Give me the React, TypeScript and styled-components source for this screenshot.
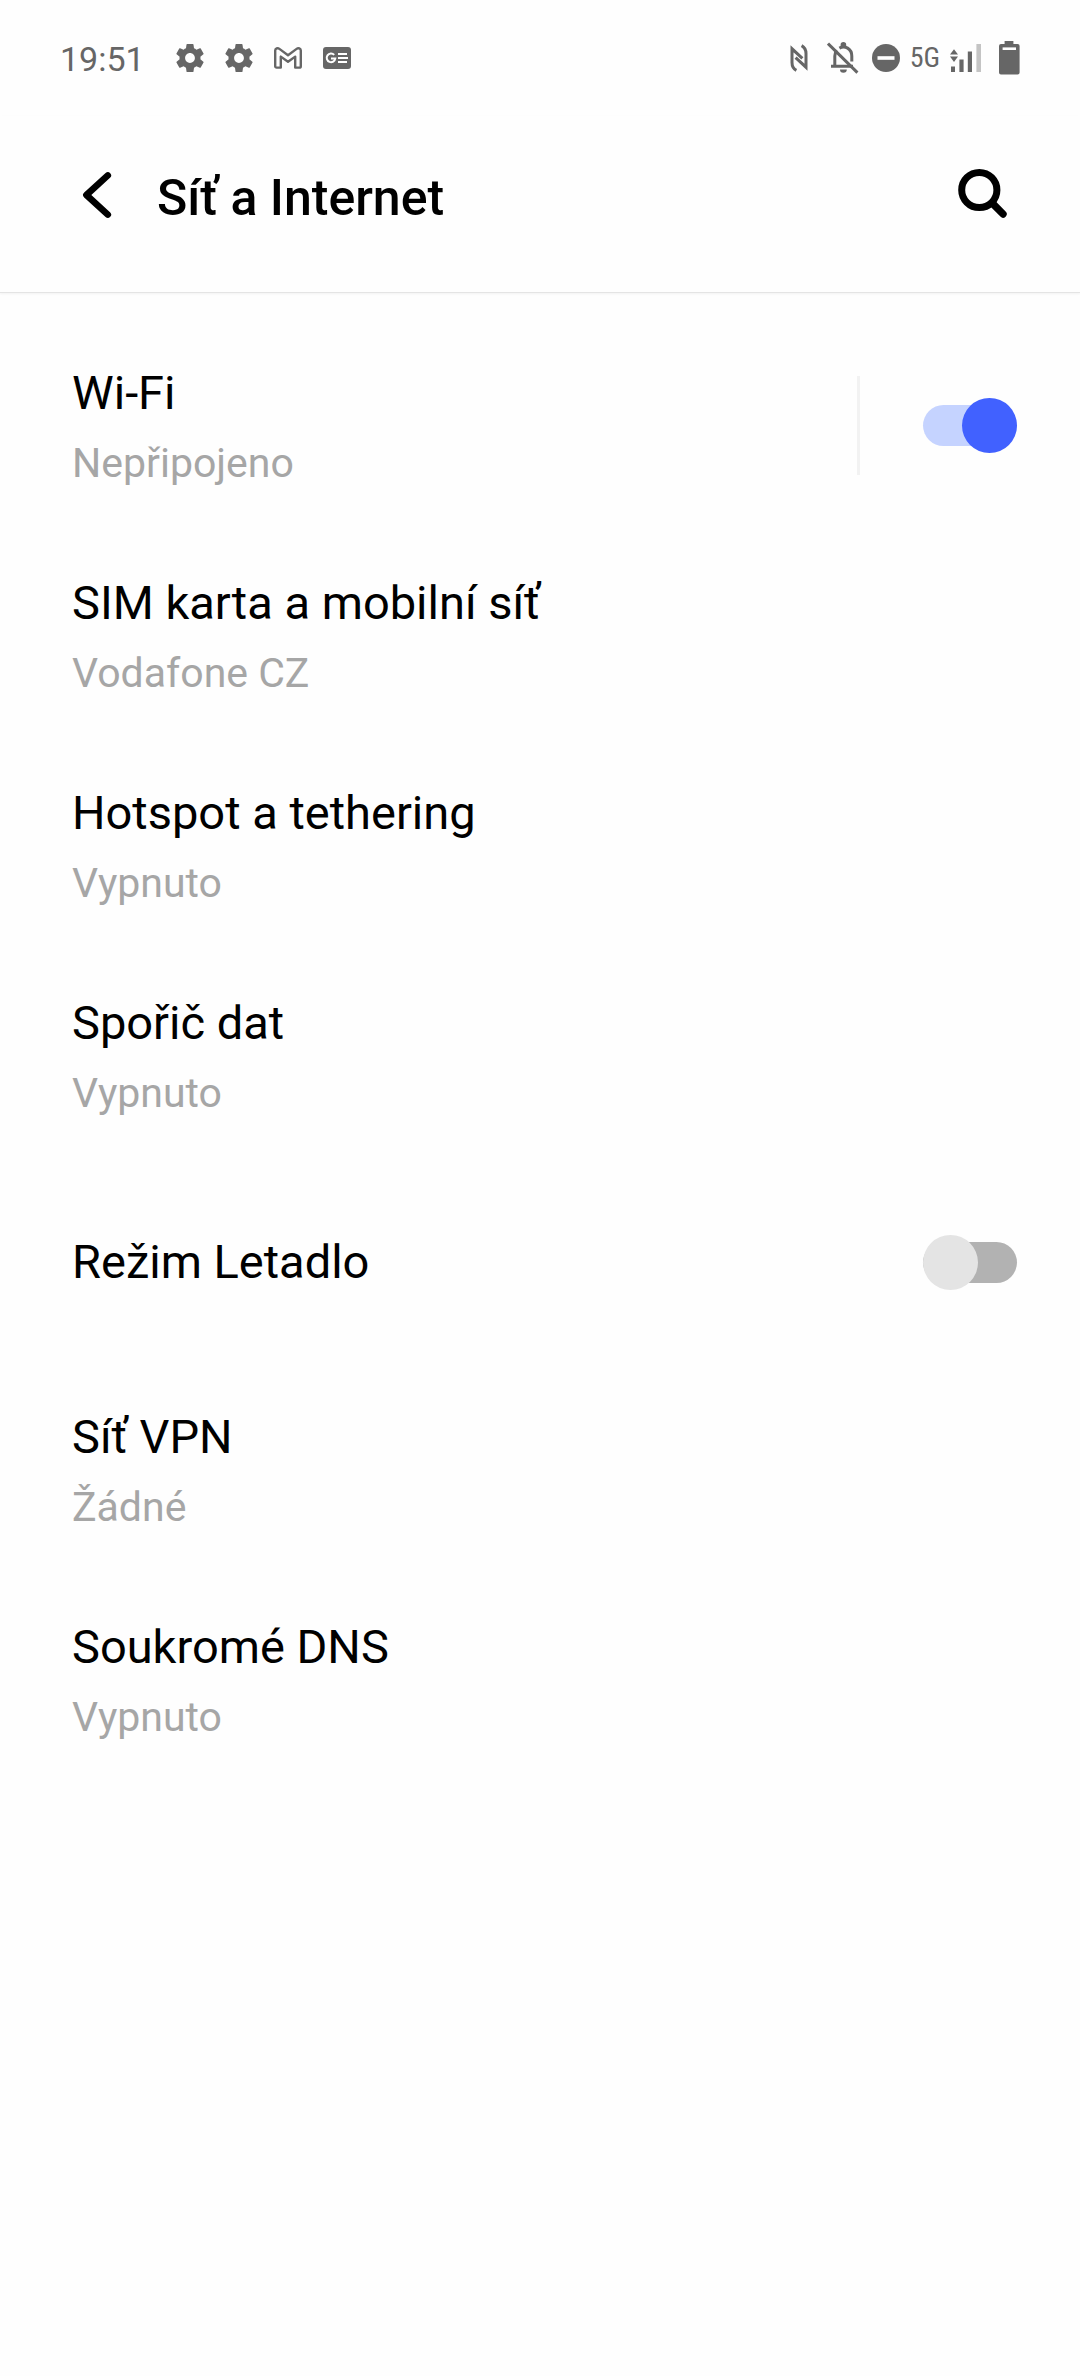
import React from "react";
import styled, { createGlobalStyle } from "styled-components";

const GlobalStyle = createGlobalStyle`
  *, *::before, *::after { box-sizing: border-box; }
  body {
    margin: 0;
    background: #fefefe;
    color: #000;
    font-family: Roboto, "Noto Sans", sans-serif;
  }
  button { font: inherit; color: inherit; background: none; border: 0; padding: 0; text-align: left; cursor: pointer; }
`;

const StatusBar = styled.div`
  display: flex;
  align-items: center;
  justify-content: space-between;
  height: 116px;
  padding: 0 60px;
  color: #666;
`;

const StatusGroup = styled.div<{ $gap: number }>`
  display: flex;
  align-items: center;
  gap: ${(p) => p.$gap}px;
`;

const Clock = styled.time`
  margin-right: 10px;
  padding-top: 2px;
  font-size: 34px;
  line-height: 40px;
`;

const Network = styled.span`
  font-family: "Roboto Condensed", Roboto, sans-serif;
  font-size: 28px;
  line-height: 32px;
`;

const Icon = styled.svg`
  display: block;
  flex: none;
`;

const Header = styled.header`
  display: flex;
  align-items: flex-start;
  height: 177px;
  padding: 50px 72px 0;
  border-bottom: 1px solid #e4e4e4;
  box-shadow: 0 1px 2px #f2f2f2;
`;

const Title = styled.h1`
  flex: 1;
  margin: 0 0 0 35px;
  font-size: 50px;
  font-weight: 500;
  line-height: 64px;
`;

const IconButton = styled.button`
  display: flex;
  align-items: center;
  justify-content: center;
  width: 50px;
  height: 58px;
`;

const List = styled.ul`
  margin: 0;
  padding: 27px 0 0;
  list-style: none;
`;

const Row = styled.li`
  display: flex;
  align-items: center;
  padding-right: 63px;
`;

const Entry = styled.button`
  flex: 1;
  display: flex;
  flex-direction: column;
  gap: 17px;
  padding: 45px 0 42px 72px;
`;

const SwitchLabel = styled.label`
  flex: 1;
  padding: 74px 0 74px 72px;
  font-size: 47px;
  line-height: 56px;
`;

const Name = styled.span`
  font-size: 47px;
  line-height: 56px;
`;

const Summary = styled.span`
  color: #a6a6a6;
  font-size: 41px;
  line-height: 50px;
`;

const Divider = styled.span`
  width: 3px;
  height: 99px;
  margin-right: 63px;
  background: #f2f2f2;
`;

const Switch = styled.input`
  appearance: none;
  display: grid;
  align-items: center;
  width: 94px;
  height: 55px;
  margin: 0;
  cursor: pointer;

  &::before,
  &::after {
    content: "";
    grid-area: 1 / 1;
  }
  &::before {
    height: 41px;
    border-radius: 21px;
    background: #b2b2b2;
  }
  &::after {
    width: 55px;
    height: 55px;
    border-radius: 50%;
    background: #e4e4e4;
  }
  &:checked::before { background: #c5d3ff; }
  &:checked::after { justify-self: end; background: #4161ff; }
`;

const GearIcon = () => (
  <Icon width="28" height="28" viewBox="2 2 20 20" fill="currentColor" aria-hidden="true">
    <path d="M19.43 12.98c.04-.32.07-.64.07-.98s-.03-.66-.07-.98l2.11-1.65c.19-.15.24-.42.12-.64l-2-3.46c-.12-.22-.39-.3-.61-.22l-2.49 1c-.52-.4-1.08-.73-1.69-.98l-.38-2.65C14.46 2.18 14.25 2 14 2h-4c-.25 0-.46.18-.49.42l-.38 2.65c-.61.25-1.17.59-1.69.98l-2.49-1c-.23-.09-.49 0-.61.22l-2 3.46c-.13.22-.07.49.12.64l2.11 1.65c-.04.32-.07.65-.07.98s.03.66.07.98l-2.11 1.65c-.19.15-.24.42-.12.64l2 3.46c.12.22.39.3.61.22l2.49-1c.52.4 1.08.73 1.69.98l.38 2.65c.03.24.24.42.49.42h4c.25 0 .46-.18.49-.42l.38-2.65c.61-.25 1.17-.59 1.69-.98l2.49 1c.23.09.49 0 .61-.22l2-3.46c.12-.22.07-.49-.12-.64l-2.11-1.65zM12 15.5c-1.93 0-3.5-1.57-3.5-3.5s1.57-3.5 3.5-3.5 3.5 1.57 3.5 3.5-1.57 3.5-3.5 3.5z" />
  </Icon>
);

const MailIcon = () => (
  <Icon width="28" height="22" viewBox="0 0 28 22" fill="none" stroke="currentColor" strokeWidth="2.4" strokeLinejoin="round" aria-hidden="true">
    <path d="M1.2 3.6C1.2 1.4 3.6.6 5.4 1.9L14 8.2l8.6-6.3C24.4.6 26.8 1.4 26.8 3.6V19.2a1.4 1.4 0 0 1-1.4 1.4H21.2V9.6L14 14.8 6.8 9.6V20.6H2.6A1.4 1.4 0 0 1 1.2 19.2Z" />
  </Icon>
);

const NewsIcon = () => (
  <Icon width="28" height="24" viewBox="0 0 28 24" aria-hidden="true">
    <rect x="0" y="1" width="28" height="22" rx="3" fill="currentColor" />
    <g fill="none" stroke="#fff" strokeWidth="2">
      <path d="M11.2 8.9A4.3 4.3 0 1 0 12.3 12.4H8" />
      <path d="M15 8h9M15 12h10M15 16h9" />
    </g>
  </Icon>
);

const NfcIcon = () => (
  <Icon width="27" height="28" viewBox="0 0 27 28" fill="none" stroke="currentColor" strokeWidth="3" aria-hidden="true">
    <path d="M6.4 26.4C2.7 24.4 2 22 2 18.4V4.8L12.4 14.4" />
    <path d="M11.6 1.6C15.3 3.6 16 6 16 9.6V23.2L5.6 13.6" />
  </Icon>
);

const MutedBellIcon = () => (
  <Icon width="35" height="32" viewBox="0 0 35 32" fill="none" stroke="currentColor" strokeWidth="3" aria-hidden="true">
    <path d="M4 24.2H26M7.8 24V14C7.8 11.6 8.6 9.6 9.8 8.2M12.4 6.1C17.8 3 24.8 6.6 24.8 14V19.6" />
    <path d="M1 1.6 30.4 30.6" />
    <path d="M13.6 4.6V2.8a2.8 2.8 0 0 1 5.6 0V4.6ZM13 27.6h6.8a3.4 3.2 0 0 1-6.8 0Z" fill="currentColor" stroke="none" />
  </Icon>
);

const DoNotDisturbIcon = () => (
  <Icon width="28" height="28" viewBox="0 0 28 28" aria-hidden="true">
    <circle cx="14" cy="14" r="14" fill="currentColor" />
    <rect x="5.5" y="12.2" width="17" height="3.6" fill="#fff" />
  </Icon>
);

const SignalIcon = () => (
  <Icon width="31" height="28" viewBox="0 0 31 28" fill="currentColor" aria-hidden="true">
    <path d="M4 5.2 8 10.6H0ZM4 18 0 12.6H8Z" />
    <path d="M1 22.4H5V28H1ZM9.4 15.6H13.6V28H9.4ZM17.8 7.6H22V28H17.8Z" />
    <path d="M26.4 0H31V28H26.4Z" fill="#c4c4c4" />
  </Icon>
);

const BatteryIcon = () => (
  <Icon width="29" height="34" viewBox="-2 0 29 34" aria-hidden="true">
    <path d="M11.6 0H20.4V3H24.6A2 2 0 0 1 26.6 5V31.4A2 2 0 0 1 24.6 33.4H8A2 2 0 0 1 6 31.4V5A2 2 0 0 1 8 3H11.6Z" fill="currentColor" />
    <rect x="9.6" y="6.4" width="13.4" height="2.6" fill="#fff" />
  </Icon>
);

const BackIcon = () => (
  <Icon width="50" height="58" viewBox="0 0 50 58" fill="none" stroke="currentColor" strokeWidth="6.6" strokeLinecap="round" strokeLinejoin="round" aria-hidden="true">
    <path d="M35.8 9.4 14.4 29 35.8 48.6" />
  </Icon>
);

const SearchIcon = () => (
  <Icon width="50" height="58" viewBox="0 0 50 58" fill="none" stroke="currentColor" strokeLinecap="round" aria-hidden="true">
    <circle cx="21.3" cy="24" r="17.6" strokeWidth="7" />
    <path d="M34.5 37.4 45 48" strokeWidth="7.4" />
  </Icon>
);

const Setting = ({ name, summary, children }: { name: string; summary: string; children?: React.ReactNode }) => (
  <Row>
    <Entry type="button">
      <Name>{name}</Name>
      <Summary>{summary}</Summary>
    </Entry>
    {children}
  </Row>
);

export default function App() {
  return (
    <>
      <GlobalStyle />
      <StatusBar>
        <StatusGroup $gap={21}>
          <Clock>19:51</Clock>
          <GearIcon />
          <GearIcon />
          <MailIcon />
          <NewsIcon />
        </StatusGroup>
        <StatusGroup $gap={10}>
          <NfcIcon />
          <MutedBellIcon />
          <DoNotDisturbIcon />
          <Network>5G</Network>
          <SignalIcon />
          <BatteryIcon />
        </StatusGroup>
      </StatusBar>
      <Header>
        <IconButton type="button" aria-label="Zpět">
          <BackIcon />
        </IconButton>
        <Title>Síť a Internet</Title>
        <IconButton type="button" aria-label="Hledat">
          <SearchIcon />
        </IconButton>
      </Header>
      <main>
        <List>
          <Setting name="Wi-Fi" summary="Nepřipojeno">
            <Divider />
            <Switch type="checkbox" role="switch" aria-label="Wi-Fi" defaultChecked />
          </Setting>
          <Setting name="SIM karta a mobilní síť" summary="Vodafone CZ" />
          <Setting name="Hotspot a tethering" summary="Vypnuto" />
          <Setting name="Spořič dat" summary="Vypnuto" />
          <Row>
            <SwitchLabel htmlFor="airplane">Režim Letadlo</SwitchLabel>
            <Switch id="airplane" type="checkbox" role="switch" />
          </Row>
          <Setting name="Síť VPN" summary="Žádné" />
          <Setting name="Soukromé DNS" summary="Vypnuto" />
        </List>
      </main>
    </>
  );
}
